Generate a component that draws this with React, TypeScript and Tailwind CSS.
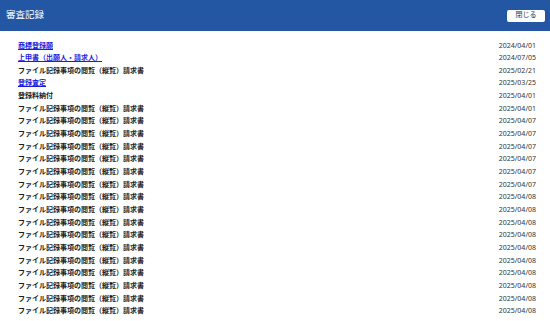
const rows: { label: string; date: string; link?: boolean }[] = [
  { label: "商標登録願", date: "2024/04/01", link: true },
  { label: "上申書（出願人・請求人）", date: "2024/07/05", link: true },
  { label: "ファイル記録事項の閲覧（縦覧）請求書", date: "2025/02/21" },
  { label: "登録査定", date: "2025/03/25", link: true },
  { label: "登録料納付", date: "2025/04/01" },
  { label: "ファイル記録事項の閲覧（縦覧）請求書", date: "2025/04/01" },
  ...Array.from({ length: 6 }, () => ({ label: "ファイル記録事項の閲覧（縦覧）請求書", date: "2025/04/07" })),
  ...Array.from({ length: 10 }, () => ({ label: "ファイル記録事項の閲覧（縦覧）請求書", date: "2025/04/08" })),
]

export default function App() {
  return (
    <div className="w-[550px] h-[321px] overflow-hidden bg-white font-['Noto_Sans','Noto_Sans_CJK_JP',sans-serif]">
      <header className="h-[31px] bg-[#2356a3] flex items-center justify-between pl-[6px] pr-[5px]">
        <h1 className="text-white text-[9.5px]">審査記録</h1>
        <button className="bg-white rounded-[2px] w-[38px] h-[12px] text-[7px] text-[#333] flex items-center justify-center">
          閉じる
        </button>
      </header>
      <div className="pt-[7.7px] pl-[18px] pr-[14px]">
        {rows.map((r, i) => (
          <div key={i} className="h-[12.667px] flex items-center justify-between text-[7px] leading-none">
            {r.link ? (
              <a href="#" className="text-[#1a1ae0] font-bold underline">{r.label}</a>
            ) : (
              <span className="text-[#1a1a1a] font-bold">{r.label}</span>
            )}
            <span className="text-[#333] text-[7px]">{r.date}</span>
          </div>
        ))}
      </div>
    </div>
  )
}
